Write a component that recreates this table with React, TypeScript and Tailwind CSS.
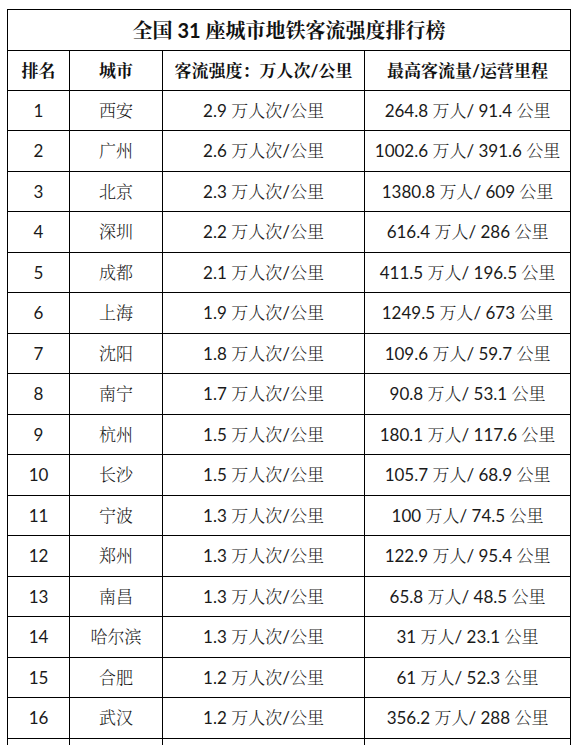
import React from "react";

const rows: [string, string, string, string][] = [
  ["1", "西安", "2.9 万人次/公里", "264.8 万人/ 91.4 公里"],
  ["2", "广州", "2.6 万人次/公里", "1002.6 万人/ 391.6 公里"],
  ["3", "北京", "2.3 万人次/公里", "1380.8 万人/ 609 公里"],
  ["4", "深圳", "2.2 万人次/公里", "616.4 万人/ 286 公里"],
  ["5", "成都", "2.1 万人次/公里", "411.5 万人/ 196.5 公里"],
  ["6", "上海", "1.9 万人次/公里", "1249.5 万人/ 673 公里"],
  ["7", "沈阳", "1.8 万人次/公里", "109.6 万人/ 59.7 公里"],
  ["8", "南宁", "1.7 万人次/公里", "90.8 万人/ 53.1 公里"],
  ["9", "杭州", "1.5 万人次/公里", "180.1 万人/ 117.6 公里"],
  ["10", "长沙", "1.5 万人次/公里", "105.7 万人/ 68.9 公里"],
  ["11", "宁波", "1.3 万人次/公里", "100 万人/ 74.5 公里"],
  ["12", "郑州", "1.3 万人次/公里", "122.9 万人/ 95.4 公里"],
  ["13", "南昌", "1.3 万人次/公里", "65.8 万人/ 48.5 公里"],
  ["14", "哈尔滨", "1.3 万人次/公里", "31 万人/ 23.1 公里"],
  ["15", "合肥", "1.2 万人次/公里", "61 万人/ 52.3 公里"],
  ["16", "武汉", "1.2 万人次/公里", "356.2 万人/ 288 公里"],
];

const font = {
  fontFamily:
    'Lato, "Noto Serif CJK SC", "Noto Sans CJK SC", serif',
};

// digits stay regular, CJK text is drawn light like the thin song-style original
function Mixed({ text }: { text: string }) {
  const parts = text.split(/([\d./ ]+)/).filter(Boolean);
  return (
    <>
      {parts.map((p, i) =>
        /[\d./ ]/.test(p) && /^[\d./ ]+$/.test(p) ? (
          <span key={i} className="font-normal">
            {p}
          </span>
        ) : (
          <span key={i} className="font-light">
            {p}
          </span>
        )
      )}
    </>
  );
}

export default function App() {
  return (
    <div className="h-[745px] overflow-hidden bg-white pl-[7px] pt-[9px]" style={font}>
      <table className="w-[563px] table-fixed border-collapse text-[17px] text-[#1a1a1a]">
        <colgroup>
          <col className="w-[62px]" />
          <col className="w-[93px]" />
          <col className="w-[202px]" />
          <col className="w-[206px]" />
        </colgroup>
        <thead>
          <tr className="h-[41px]">
            <th colSpan={4} className="border border-black text-[20px] font-bold text-[#111]">
              全国 31 座城市地铁客流强度排行榜
            </th>
          </tr>
          <tr className="h-[40px] text-[#111]">
            <th className="border border-black font-bold">排名</th>
            <th className="border border-black font-bold">城市</th>
            <th className="border border-black font-bold">客流强度：万人次/公里</th>
            <th className="border border-black font-bold">最高客流量/运营里程</th>
          </tr>
        </thead>
        <tbody>
          {rows.map((r, i) => (
            <tr key={r[0]} className={i % 2 === 0 ? "h-[40px]" : "h-[41px]"}>
              <td className="border border-black text-center">{r[0]}</td>
              <td className="border border-black text-center font-light">{r[1]}</td>
              <td className="border border-black text-center">
                <Mixed text={r[2]} />
              </td>
              <td className="border border-black text-center whitespace-nowrap">
                <Mixed text={r[3]} />
              </td>
            </tr>
          ))}
          <tr className="h-[41px]">
            <td className="border border-black"></td>
            <td className="border border-black"></td>
            <td className="border border-black"></td>
            <td className="border border-black"></td>
          </tr>
        </tbody>
      </table>
    </div>
  );
}
